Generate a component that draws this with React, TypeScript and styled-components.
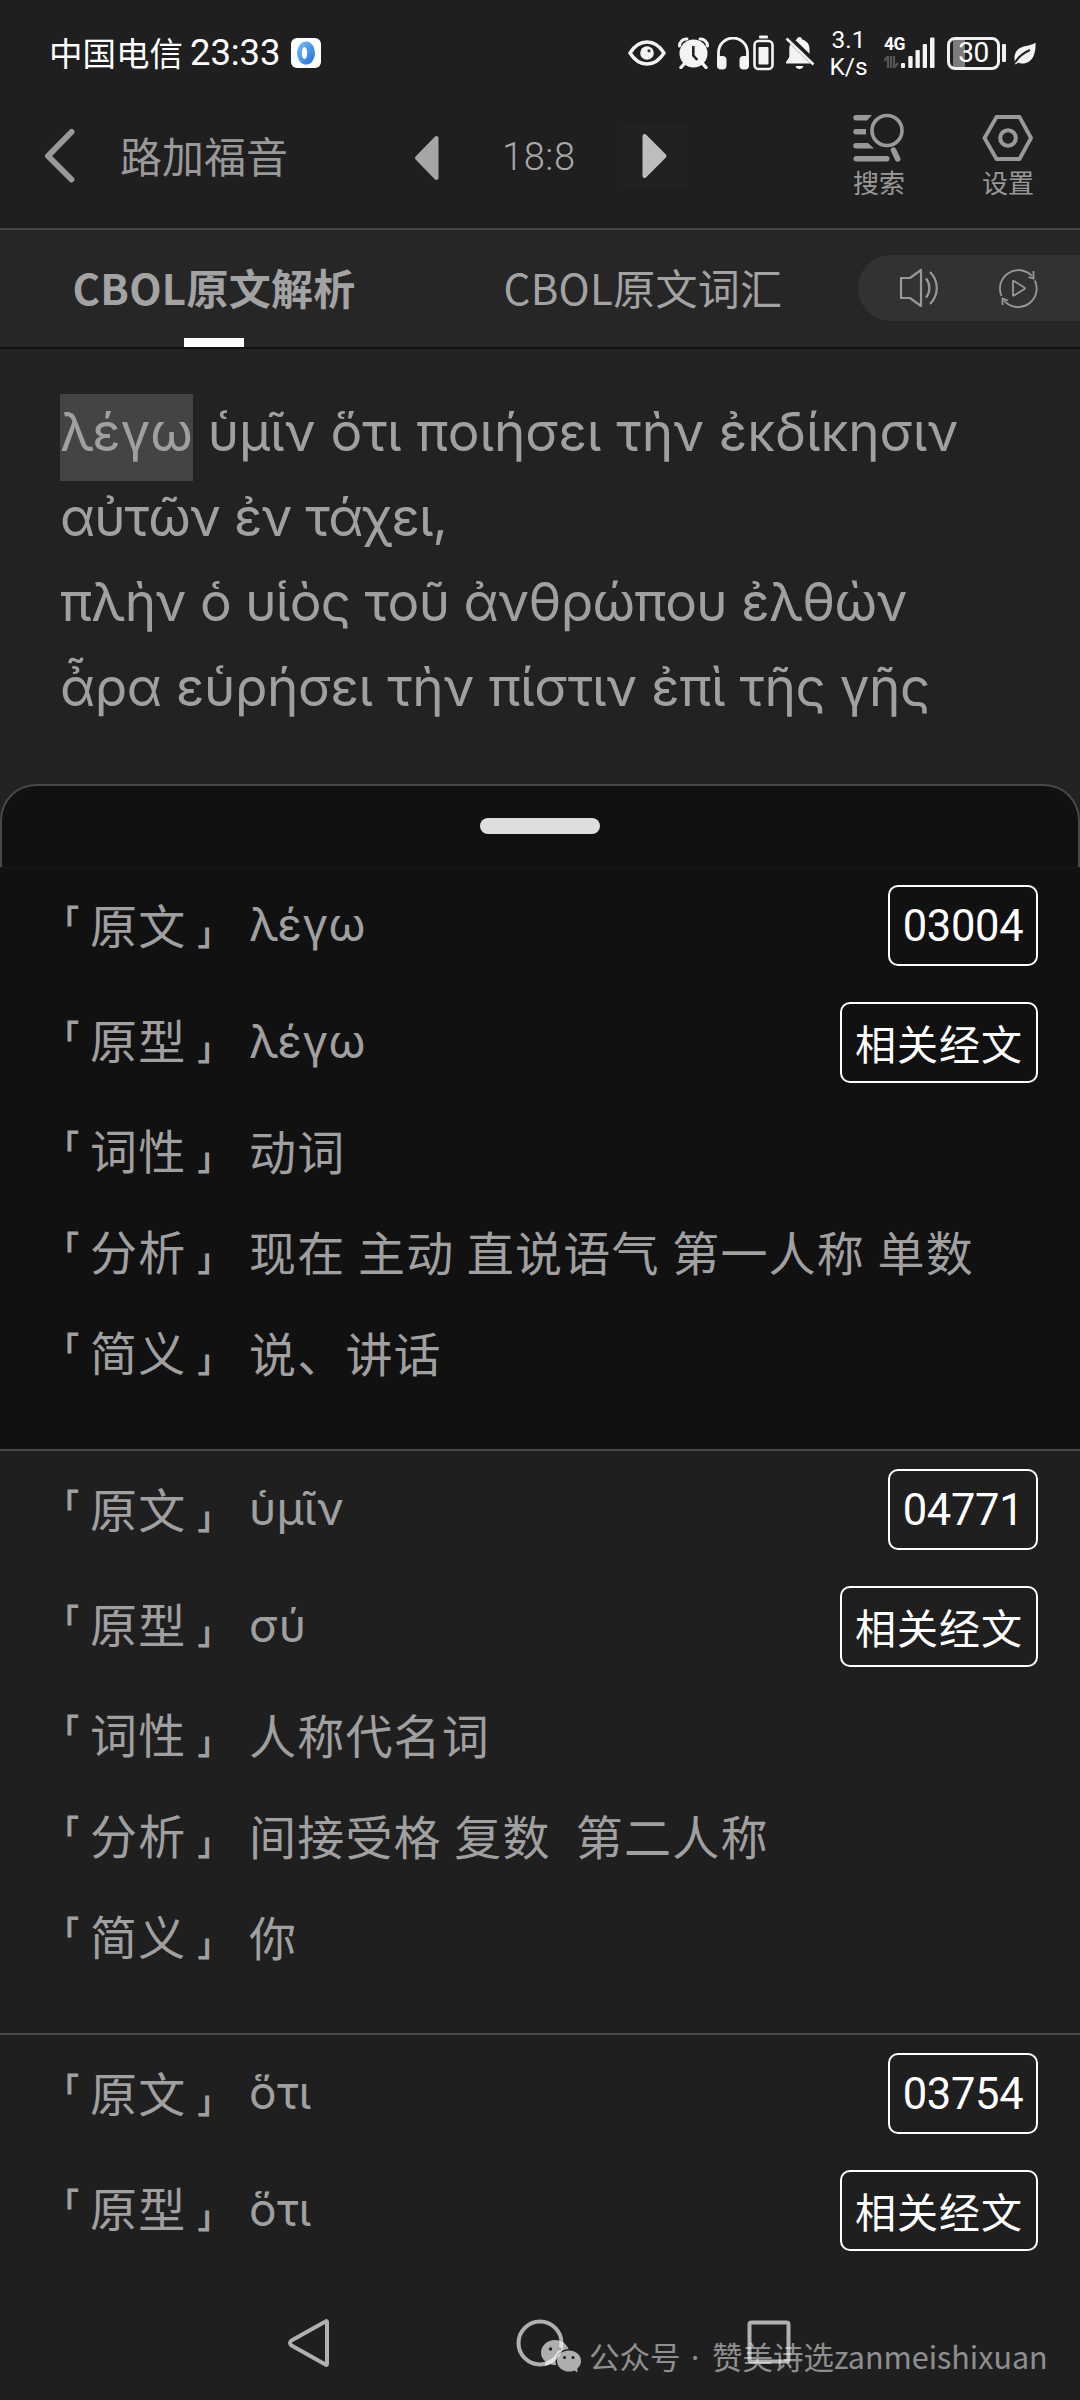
import React from "react";
import styled, { createGlobalStyle } from "styled-components";

const CJK = `"Noto Sans CJK SC", "Noto Sans", sans-serif`;
const LATIN = `Roboto, "Noto Sans CJK SC", sans-serif`;
const GREEK = `Inter, "Noto Sans", sans-serif`;

const Global = createGlobalStyle`
  * { box-sizing: border-box; }
  body { margin: 0; background: #1f1f1f; }
`;

const Screen = styled.div`
  position: relative;
  display: flex;
  flex-direction: column;
  width: 1080px;
  height: 2400px;
  overflow: hidden;
  background: #1f1f1f;
  color: #a3a3a3;
  font-family: ${CJK};

  & > * {
    flex-shrink: 0;
  }
`;

/* ---------- status bar ---------- */

const StatusBar = styled.div`
  display: flex;
  align-items: center;
  height: 106px;
  padding-left: 49px;
  color: #fff;
`;

const Carrier = styled.span`
  padding-bottom: 2px;
  font-size: 33.5px;
  line-height: 48px;
`;

const Clock = styled.span`
  margin-left: 7px;
  font: 400 36.5px/48px ${LATIN};
  letter-spacing: -0.1px;
  width: 101px;
`;

const AppBadge = styled.div`
  display: flex;
  align-items: center;
  justify-content: center;
  width: 30px;
  height: 30px;
  border-radius: 6px;
  background: #fff;
`;

const StatusIcons = styled.div`
  display: flex;
  align-items: center;
  margin-left: auto;
  padding-right: 44px;
`;

const Glyph = styled.svg<{ $gap?: number }>`
  display: block;
  flex: none;
  margin-left: ${(p) => p.$gap ?? 0}px;
`;

const NetSpeed = styled.div`
  display: flex;
  flex-direction: column;
  align-items: center;
  width: 37px;
  margin-left: 15px;
  font: 400 24.5px/27px ${LATIN};
`;

const Cellular = styled.div`
  display: flex;
  flex-direction: column;
  width: 17px;
  height: 32px;
  margin-left: 17px;
  font: 700 17.5px/14px ${LATIN};
  letter-spacing: -0.5px;
`;

const DataArrows = styled.svg`
  display: block;
  margin-top: 5px;
`;

const BatteryBox = styled.div`
  display: flex;
  align-items: center;
  justify-content: center;
  width: 53px;
  height: 33px;
  margin-left: 12px;
  border: 3px solid #f0f0f0;
  border-radius: 8px;
  background: linear-gradient(90deg, #1f1f1f 3px, #7c7c7c 3px, #7c7c7c 15px, #1f1f1f 15px);
  font: 400 28px/28px ${LATIN};
  letter-spacing: -0.5px;
`;

const BatteryNub = styled.div`
  width: 4px;
  height: 18px;
  margin-left: 2px;
  border-radius: 1px;
  background: #f0f0f0;
`;

/* ---------- app bar ---------- */

const AppBar = styled.header`
  display: flex;
  align-items: flex-start;
  height: 124px;
  padding-left: 44px;
  border-bottom: 2px solid #484848;
`;

const BackSlot = styled.div`
  display: flex;
  width: 76px;
  padding-top: 22px;
`;

const Title = styled.h1`
  width: 294px;
  margin: 18px 0 0;
  font-size: 42px;
  font-weight: 400;
  line-height: 62px;
  color: #999;
`;

const PrevSlot = styled.div`
  width: 88px;
  padding-top: 29px;
`;

const Chapter = styled.span`
  width: 121px;
  padding-top: 30px;
  font: 300 38px/42px ${LATIN};
  letter-spacing: 0.6px;
  color: #a8a8a8;
`;

const NextSlot = styled.div`
  display: flex;
  align-items: center;
  width: 65px;
  height: 64px;
  margin-top: 18px;
  padding-left: 19px;
  background: #212121;
`;

const Action = styled.div<{ $gap: number }>`
  display: flex;
  flex-direction: column;
  align-items: center;
  width: 54px;
  margin-left: ${(p) => p.$gap}px;
  padding-top: 7px;
  font-size: 26px;
  line-height: 34px;
  color: #999;
`;

const ActionLabel = styled.span`
  margin-top: 3px;
  white-space: nowrap;
`;

/* ---------- tabs ---------- */

const Tabs = styled.nav`
  display: flex;
  align-items: stretch;
  height: 119px;
  background: #262626;
  border-bottom: 2px solid #111;
`;

const Tab = styled.div<{ $active?: boolean; $width: number }>`
  display: flex;
  flex-direction: column;
  align-items: center;
  justify-content: flex-end;
  width: ${(p) => p.$width}px;
  font-size: 42px;
  font-weight: ${(p) => (p.$active ? 700 : 400)};
  line-height: 62px;
  letter-spacing: 0.3px;
  color: #a3a3a3;
  white-space: nowrap;
`;

const Indicator = styled.div<{ $on?: boolean }>`
  width: 60px;
  height: 9px;
  margin-top: 20px;
  background: ${(p) => (p.$on ? "#fff" : "transparent")};
`;

const AudioPill = styled.div`
  display: flex;
  align-items: center;
  flex: 1;
  height: 66px;
  margin-top: 25px;
  padding-left: 41px;
  border-radius: 33px 0 0 33px;
  background: #323232;
`;

/* ---------- verse ---------- */

const Verse = styled.section`
  height: 435px;
  padding: 41px 0 0 60px;
  background: #222;
  color: #a0a0a0;
  font: 400 53px/85px ${GREEK};
`;

const VerseLine = styled.div<{ $tracking: number }>`
  white-space: nowrap;
  letter-spacing: ${(p) => p.$tracking}px;
`;

const Highlight = styled.mark`
  padding: 6px 0 17px;
  background: #444;
  color: inherit;
`;

/* ---------- sheet ---------- */

const SheetWrap = styled.div`
  background: #222;
`;

const SheetTop = styled.div`
  display: flex;
  justify-content: center;
  height: 83px;
  padding-top: 32px;
  border: 2px solid #484848;
  border-bottom: 0;
  border-radius: 36px 36px 0 0;
  background: #111;
`;

const Handle = styled.div`
  width: 120px;
  height: 16px;
  border-radius: 8px;
  background: #dedede;
`;

const Entry = styled.section<{ $active: boolean; $first: boolean }>`
  height: 584px;
  padding: ${(p) => (p.$first ? 17 : 18)}px 42px 0 35px;
  border-bottom: 2px solid #484848;
  ${(p) => (p.$first ? "border-top: 1px solid #191919;" : "")}
  background: ${(p) => (p.$active ? "#111" : "#1f1f1f")};
`;

const LemmaRow = styled.div<{ $gap: number }>`
  display: flex;
  align-items: center;
  height: 81px;
  margin-bottom: ${(p) => p.$gap}px;
`;

const TextRow = styled.div`
  display: flex;
  align-items: center;
  height: 101px;
`;

const Label = styled.span<{ $lift?: boolean }>`
  display: flex;
  align-items: baseline;
  width: 214px;
  padding-top: ${(p) => (p.$lift ? 0 : 3)}px;
  padding-bottom: ${(p) => (p.$lift ? 1 : 0)}px;
  font-size: 47px;
  line-height: 68px;
  letter-spacing: 1.2px;
  color: #a0a0a0;
`;

const OpenMark = styled.span`
  width: 55px;
  padding-left: 12px;
  font-size: 32px;
  font-weight: 700;
  transform: translateY(-11px);
`;

const CloseMark = styled.span`
  margin-left: 11px;
  font-size: 32px;
  font-weight: 700;
  transform: translateY(1px);
`;

const Value = styled.span`
  padding-bottom: 1px;
  font-size: 47px;
  line-height: 68px;
  letter-spacing: 1.2px;
  word-spacing: 0.8px;
  white-space: pre;
  color: #a0a0a0;
`;

const GreekValue = styled.span`
  padding-bottom: 3px;
  font: 400 46px/68px ${GREEK};
  letter-spacing: 0.3px;
  color: #a0a0a0;
`;

const Chip = styled.button<{ $digits?: boolean }>`
  display: flex;
  align-items: center;
  justify-content: center;
  width: ${(p) => (p.$digits ? 150 : 198)}px;
  height: 81px;
  margin: 0 0 0 auto;
  padding: ${(p) => (p.$digits ? "2px 0 0" : "0 0 2px")};
  border: 2px solid #fff;
  border-radius: 10px;
  background: transparent;
  color: #fff;
  font: 400 ${(p) => (p.$digits ? "43.5px" : "41px")} / 60px ${(p) => (p.$digits ? LATIN : CJK)};
  letter-spacing: ${(p) => (p.$digits ? -0.3 : 1)}px;
  white-space: nowrap;
`;

/* ---------- bottom ---------- */

const NavBar = styled.nav`
  position: absolute;
  left: 0;
  right: 0;
  bottom: 0;
  display: flex;
  align-items: center;
  height: 115px;
  padding: 0 0 0 287px;
  background: #1f1f1f;
`;

const Watermark = styled.div`
  position: absolute;
  left: 541px;
  top: 2335px;
  display: flex;
  align-items: center;
  color: rgba(255, 255, 255, 0.5);
  font-size: 30.5px;
  line-height: 42px;
  white-space: pre;
`;

const WatermarkName = styled.span`
  margin-left: 7px;
`;

const Dot = styled.span`
  font-family: "Noto Sans", sans-serif;
  letter-spacing: 2.5px;
`;

interface Word {
  source: string;
  lemma: string;
  code: string;
  pos: string;
  parse: string;
  gloss: string;
}

const words: Word[] = [
  { source: "λέγω", lemma: "λέγω", code: "03004", pos: "动词", parse: "现在 主动 直说语气 第一人称 单数", gloss: "说、讲话" },
  { source: "ὑμῖν", lemma: "σύ", code: "04771", pos: "人称代名词", parse: "间接受格 复数  第二人称", gloss: "你" },
  { source: "ὅτι", lemma: "ὅτι", code: "03754", pos: "", parse: "", gloss: "" },
];

function FieldLabel({ text, lift }: { text: string; lift?: boolean }) {
  return (
    <Label $lift={lift}>
      <OpenMark>「</OpenMark>
      <span>{text}</span>
      <CloseMark>」</CloseMark>
    </Label>
  );
}

function WordEntry({ word, active, first }: { word: Word; active: boolean; first: boolean }) {
  return (
    <Entry $active={active} $first={first}>
      <LemmaRow $gap={36}>
        <FieldLabel text="原文" />
        <GreekValue>{word.source}</GreekValue>
        <Chip $digits>{word.code}</Chip>
      </LemmaRow>
      <LemmaRow $gap={17}>
        <FieldLabel text="原型" lift />
        <GreekValue>{word.lemma}</GreekValue>
        <Chip>相关经文</Chip>
      </LemmaRow>
      {word.pos && (
        <>
          <TextRow>
            <FieldLabel text="词性" />
            <Value>{word.pos}</Value>
          </TextRow>
          <TextRow>
            <FieldLabel text="分析" />
            <Value>{word.parse}</Value>
          </TextRow>
          <TextRow>
            <FieldLabel text="简义" />
            <Value>{word.gloss}</Value>
          </TextRow>
        </>
      )}
    </Entry>
  );
}

function StatusGlyphs() {
  const w = "#f4f4f4";
  return (
    <>
      <Glyph width="38" height="26" viewBox="0 0 38 26">
        <path d="M2 13C7 5 13 2 19 2s12 3 17 11c-5 8-11 11-17 11S7 21 2 13z" fill="none" stroke={w} strokeWidth="3.4" />
        <circle cx="19" cy="13" r="6.8" fill={w} />
        <circle cx="21" cy="10.8" r="1.6" fill="#333" />
      </Glyph>
      <Glyph $gap={12} width="31" height="32" viewBox="0 0 31 32">
        <circle cx="15.5" cy="16.5" r="14" fill={w} />
        <path d="M1.5 9A7 7 0 0 1 9 2M29.500 9A7 7 0 0 0 22 2" fill="none" stroke={w} strokeWidth="3" strokeLinecap="round" />
        <path d="M6 27l-3 3.500M25 27l3 3.500" stroke={w} strokeWidth="3.400" strokeLinecap="round" />
        <path d="M15.300 9v9.500l4 4.500" fill="none" stroke="#222" strokeWidth="2.600" />
      </Glyph>
      <Glyph $gap={8} width="32" height="33" viewBox="0 0 32 33">
        <path d="M1.500 26V15.500a14.500 14.500 0 0 1 29 0V26" fill="none" stroke={w} strokeWidth="2.800" />
        <rect x="0" y="19" width="9.500" height="13.500" rx="4" fill={w} />
        <rect x="22.500" y="19" width="9.500" height="13.500" rx="4" fill={w} />
      </Glyph>
      <Glyph $gap={4} width="21" height="36" viewBox="0 0 21 36">
        <rect x="6" y="0.500" width="9" height="3" rx="1" fill={w} />
        <rect x="1.500" y="6" width="18" height="28" rx="4" fill="none" stroke={w} strokeWidth="2.600" />
        <rect x="5.500" y="12" width="10" height="17.500" rx="1" fill={w} />
      </Glyph>
      <Glyph $gap={11} width="30" height="34" viewBox="0 0 30 34">
        <path d="M14.500 1c1.500 0 2.400 1 2.600 2.500C22 4.800 24.500 8.500 24.500 13v8l3 5v1.500H1V26l3.300-5v-8c0-4.500 2.600-8.200 7.500-9.500C12 2 13 1 14.500 1z" fill={w} />
        <path d="M10.500 30h8c-.5 2-2 3-4 3s-3.500-1-4-3z" fill={w} />
        <path d="M2 .5l28 27" stroke="#1f1f1f" strokeWidth="6.500" />
        <path d="M1.500 2.500l27 26" stroke={w} strokeWidth="2.600" />
      </Glyph>
      <NetSpeed>
        <span>3.1</span>
        <span>K/s</span>
      </NetSpeed>
      <Cellular>
        <span>4G</span>
        <DataArrows width="16" height="12" viewBox="0 0 16 12">
          <path d="M0 5l4-5v12M7 0v12M10 0v12l4-5" fill="none" stroke="#555" strokeWidth="2.200" />
        </DataArrows>
      </Cellular>
      <Glyph width="34" height="32" viewBox="0 0 34 32">
        <rect x="0" y="26" width="4" height="5" rx="1" fill={w} />
        <rect x="7.300" y="19" width="4.300" height="12" rx="1" fill={w} />
        <rect x="14.500" y="13" width="4.300" height="18" rx="1" fill={w} />
        <rect x="21.700" y="7" width="4.300" height="24" rx="1" fill={w} />
        <rect x="29" y="0.500" width="4.500" height="30.500" rx="1" fill={w} />
      </Glyph>
      <BatteryBox>30</BatteryBox>
      <BatteryNub />
      <Glyph $gap={8} width="22" height="23" viewBox="0 0 22 23">
        <path d="M21.500 0.500C22 10 19.500 19 12 21c-3.500 1-6 .6-7.500-.5L1.500 22.500C-.5 16 0 9.500 6 6 10.500 3.500 17 4 21.500.5z" fill={w} />
        <path d="M1 20.500C4 15.500 9 11 16 8" fill="none" stroke="#1f1f1f" strokeWidth="2" />
      </Glyph>
    </>
  );
}

export default function App() {
  return (
    <Screen>
      <Global />
      <StatusBar>
        <Carrier>中国电信</Carrier>
        <Clock>23:33</Clock>
        <AppBadge>
          <svg width="18" height="24" viewBox="0 0 18 24">
            <defs>
              <linearGradient id="ring" x1="0" y1="0" x2="1" y2="1">
                <stop offset="0" stopColor="#7cc0f2" />
                <stop offset="1" stopColor="#1d6fe0" />
              </linearGradient>
            </defs>
            <ellipse cx="9" cy="12" rx="9" ry="11.500" fill="url(#ring)" />
            <ellipse cx="7.500" cy="12" rx="2.700" ry="6" fill="#fff" />
          </svg>
        </AppBadge>
        <StatusIcons>
          <StatusGlyphs />
        </StatusIcons>
      </StatusBar>

      <AppBar>
        <BackSlot>
          <svg width="32" height="56" viewBox="0 0 32 56">
            <path d="M27.500 4L4 28l23.500 23.500" fill="none" stroke="#999" strokeWidth="6" strokeLinecap="round" strokeLinejoin="round" />
          </svg>
        </BackSlot>
        <Title>路加福音</Title>
        <PrevSlot>
          <svg width="26" height="46" viewBox="0 0 26 46">
            <path d="M22.500 3v40L3 23z" fill="#a6a6a6" stroke="#a6a6a6" strokeWidth="4" strokeLinejoin="round" />
          </svg>
        </PrevSlot>
        <Chapter>18:8</Chapter>
        <NextSlot>
          <svg width="26" height="46" viewBox="0 0 26 46">
            <path d="M2.500 3v40L22.500 23z" fill="#bdbdbd" stroke="#bdbdbd" strokeWidth="4" strokeLinejoin="round" />
          </svg>
        </NextSlot>
        <Action $gap={164}>
          <svg width="52" height="49" viewBox="0 0 52 49">
            <g fill="#999">
              <path d="M3 2h16l-5 5.500H3a2.700 2.700 0 0 1 0-5.500z" />
              <path d="M3 16h10v5.500H3a2.700 2.700 0 0 1 0-5.500z" />
              <path d="M3 30h12l6 5.500H3a2.700 2.700 0 0 1 0-5.500z" />
              <rect x="0.500" y="43" width="36" height="5.500" rx="2.700" />
            </g>
            <circle cx="34" cy="17.500" r="15" fill="none" stroke="#999" strokeWidth="3.600" />
            <path d="M40.500 37l4.200 9" stroke="#999" strokeWidth="5.500" strokeLinecap="round" />
          </svg>
          <ActionLabel>搜索</ActionLabel>
        </Action>
        <Action $gap={75}>
          <svg width="52" height="49" viewBox="0 0 52 49">
            <path d="M14.500 4h23L49 25 37.500 46h-23L2.500 25z" fill="none" stroke="#999" strokeWidth="3.800" strokeLinejoin="round" />
            <circle cx="26" cy="25" r="7.800" fill="none" stroke="#999" strokeWidth="4" />
          </svg>
          <ActionLabel>设置</ActionLabel>
        </Action>
      </AppBar>

      <Tabs>
        <Tab $active $width={428}>
          CBOL原文解析
          <Indicator $on />
        </Tab>
        <Tab $width={430}>
          CBOL原文词汇
          <Indicator />
        </Tab>
        <AudioPill>
          <svg width="42" height="40" viewBox="0 0 42 40" fill="none" stroke="#999" strokeWidth="2.2">
            <path d="M2 10h9L22 2v36L11 30H2z" strokeLinejoin="round" />
            <path d="M27 10.500c4.500 5.500 4.500 13.500 0 19M31 4c9 9 9 23 0 32" />
          </svg>
          <Glyph $gap={57} width="40" height="40" viewBox="0 0 40 40" fill="none" stroke="#999" strokeWidth="1.800">
            <path d="M3.500 28A18.500 18.500 0 0 1 34 8M36.800 12.500A18.500 18.500 0 0 1 6 32.500" />
            <path d="M35.500 3v7.500l-5-1.500M4.500 37v-6.500l5.500 2" />
            <path d="M15 13.500v13.500q0 1 1 .5l10.500-6.500q.8-.7 0-1.400L16 13q-1-.4-1 .5z" />
          </Glyph>
        </AudioPill>
      </Tabs>

      <Verse lang="el">
        <VerseLine $tracking={-0.05}>
          <Highlight>λέγω</Highlight> ὑμῖν ὅτι ποιήσει τὴν ἐκδίκησιν
        </VerseLine>
        <VerseLine $tracking={-1}>αὐτῶν ἐν τάχει,</VerseLine>
        <VerseLine $tracking={-0.7}>πλὴν ὁ υἱὸς τοῦ ἀνθρώπου ἐλθὼν</VerseLine>
        <VerseLine $tracking={-0.43}>ἆρα εὑρήσει τὴν πίστιν ἐπὶ τῆς γῆς</VerseLine>
      </Verse>

      <SheetWrap>
        <SheetTop>
          <Handle />
        </SheetTop>
      </SheetWrap>
      {words.map((word, i) => (
        <WordEntry key={word.code} word={word} active={i === 0} first={i === 0} />
      ))}

      <NavBar>
        <svg width="44" height="50" viewBox="0 0 44 50">
          <path d="M40 4v42q0 1.500-1.500.5L4.500 27.500q-3-2.500 0-5L38.500 3.500Q40 2.500 40 4z" fill="none" stroke="#b0b0b0" strokeWidth="4" strokeLinejoin="round" />
        </svg>
        <Glyph $gap={185} width="48" height="50" viewBox="0 0 48 50">
          <circle cx="24" cy="25" r="21.500" fill="none" stroke="#b0b0b0" strokeWidth="4" />
        </Glyph>
        <Glyph $gap={183} width="44" height="50" viewBox="0 0 44 50">
          <rect x="2.500" y="4.500" width="39" height="39" rx="2" fill="none" stroke="#b0b0b0" strokeWidth="4" />
        </Glyph>
      </NavBar>

      <Watermark>
        <svg width="41" height="33" viewBox="0 0 41 33">
          <defs>
            <mask id="bubbles">
              <ellipse cx="14" cy="12.500" rx="14" ry="12.500" fill="#fff" />
              <path d="M5 20l-1 6 7-2.500z" fill="#fff" />
              <circle cx="9.500" cy="9" r="1.700" fill="#000" />
              <circle cx="19" cy="9" r="1.700" fill="#000" />
              <ellipse cx="28" cy="21" rx="13.500" ry="12" fill="#000" />
              <ellipse cx="28" cy="21" rx="12" ry="10.500" fill="#fff" />
              <path d="M31 29l5.500 3.500-.5-6z" fill="#fff" />
              <circle cx="23.500" cy="17.500" r="1.500" fill="#000" />
              <circle cx="32" cy="17.500" r="1.500" fill="#000" />
            </mask>
          </defs>
          <rect width="41" height="33" fill="rgba(255,255,255,0.64)" mask="url(#bubbles)" />
        </svg>
        <WatermarkName>
          公众号<Dot> · </Dot>赞美诗选zanmeishixuan
        </WatermarkName>
      </Watermark>
    </Screen>
  );
}
